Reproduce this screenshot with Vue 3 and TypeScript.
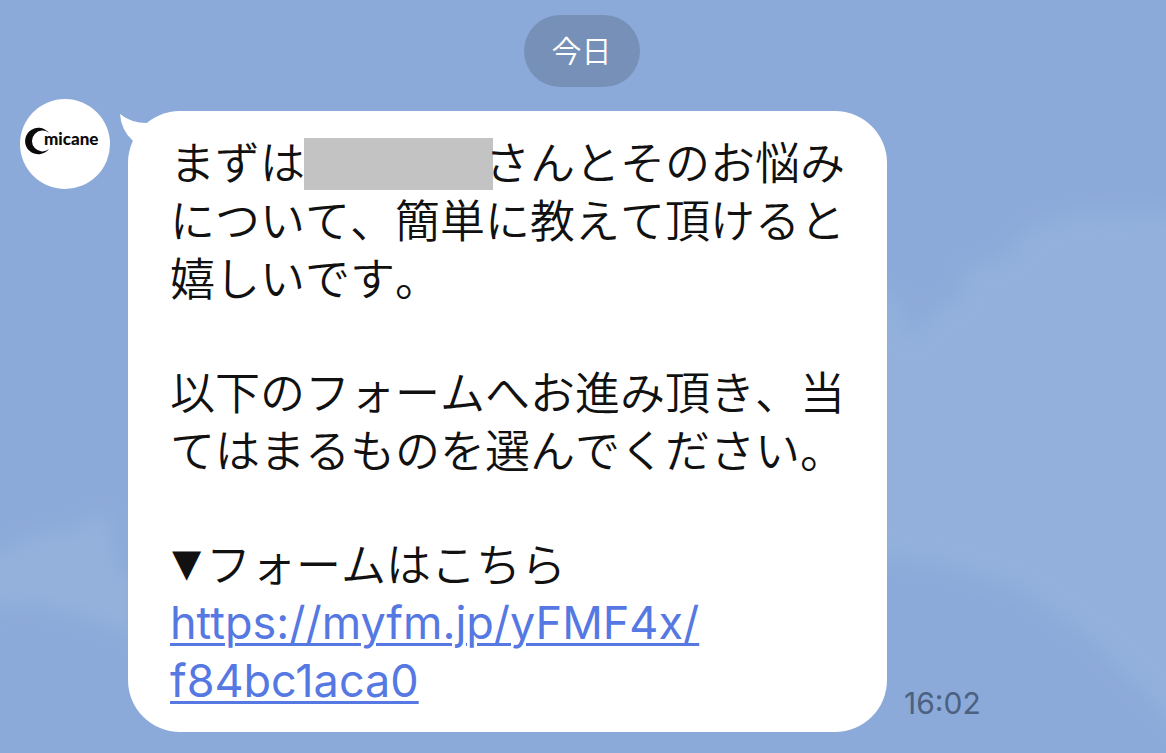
<script setup lang="ts">
interface Message {
  sender: string
  time: string
  url: string
  urlLines: string[]
}

const message: Message = {
  sender: 'micane',
  time: '16:02',
  url: 'https://myfm.jp/yFMF4x/f84bc1aca0',
  urlLines: ['https://myfm.jp/yFMF4x/', 'f84bc1aca0'],
}
</script>

<template>
  <main class="chat">
    <svg class="sky" viewBox="0 0 1166 753" preserveAspectRatio="none" aria-hidden="true">
      <defs>
        <filter id="soft" x="-20%" y="-20%" width="140%" height="140%">
          <feGaussianBlur stdDeviation="10" />
        </filter>
      </defs>
      <path
        filter="url(#soft)"
        fill="#92b0db"
        d="M870 290 L898 298 L912 338 L935 306 L958 298 L964 268 L1004 256 L1030 226 L1080 212 L1220 214 L1220 780 L1150 700 L1090 640 L1020 590 L940 566 L870 556 Z"
      />
      <path
        filter="url(#soft)"
        fill="#93b1db"
        d="M-30 556 L10 548 L42 532 L82 528 L98 508 L110 520 L116 560 L136 590 L136 636 L90 620 L40 606 L-30 608 Z"
      />
    </svg>

    <div class="day"><time class="day-label">今日</time></div>

    <article class="message">
      <svg class="avatar" viewBox="0 0 90 90" role="img" :aria-label="message.sender">
        <circle cx="45" cy="45" r="45" fill="#fff" />
        <path d="M29 34 A13.3 13.3 0 1 0 29 50 A10.4 10.4 0 1 1 29 34 Z" fill="#0a0a0a" />
        <text x="24" y="46" class="avatar-name">{{ message.sender }}</text>
      </svg>

      <div class="bubble">
        <svg class="tail" viewBox="0 0 40 40" aria-hidden="true">
          <path d="M0 0 Q11 9 27 9 L40 8 L40 36 L13 27 Q1 16 0 0 Z" fill="#fff" />
        </svg>
        <p>
          まずは<span class="redacted"></span>さんとそのお悩み<br />について、簡単に教えて頂けると<br />嬉しいです。
        </p>
        <p>以下のフォームへお進み頂き、当<br />てはまるものを選んでください。</p>
        <div>
          <p><span class="marker">▼</span>フォームはこちら</p>
          <a class="link" :href="message.url"
            >{{ message.urlLines[0] }}<br />{{ message.urlLines[1] }}</a
          >
        </div>
      </div>

      <time class="sent">{{ message.time }}</time>
    </article>
  </main>
</template>

<style>
body {
  margin: 0;
  background: #8caad9;
}
</style>

<style scoped>
.chat {
  position: relative;
  min-height: 100vh;
  box-sizing: border-box;
  padding: 15px 23px 21px 20px;
  overflow: hidden;
  background: #8caad9;
  font-family: Inter, "Noto Sans CJK JP", sans-serif;
}

.sky {
  position: absolute;
  inset: 0;
  width: 100%;
  height: 100%;
}

.day {
  position: relative;
  display: flex;
  justify-content: center;
  margin-bottom: 12px;
}

.day-label {
  padding: 0 28px 4px;
  border-radius: 36px;
  background: #7790b8;
  color: #fff;
  font-family: "Noto Sans CJK JP", sans-serif;
  font-size: 30px;
  font-weight: 350;
  line-height: 68px;
}

.message {
  position: relative;
  display: flex;
  align-items: flex-start;
}

.avatar {
  flex: none;
  width: 90px;
  height: 90px;
  margin-right: 18px;
}

.avatar-name {
  font-family: Lato, sans-serif;
  font-size: 17px;
  font-weight: 900;
  fill: #0a0a0a;
}

.bubble {
  position: relative;
  display: flex;
  flex-direction: column;
  gap: 56px;
  margin-top: 12px;
  padding: 21px 42px 22px;
  border-radius: 52px;
  background: #fff;
  color: #111;
  font-family: "Noto Sans CJK JP", sans-serif;
  font-size: 45px;
  font-weight: 350;
  font-kerning: none;
  line-height: 58px;
  white-space: nowrap;
}

.bubble p {
  margin: 0;
}

.tail {
  position: absolute;
  top: 3px;
  left: -8px;
  width: 40px;
  height: 40px;
}

.redacted {
  display: inline-block;
  width: 189px;
  height: 52px;
  margin: 6px -8px 0 -1px;
  vertical-align: top;
  background: #c3c3c3;
}

.marker {
  display: inline-block;
  width: 36px;
  font-family: "DejaVu Sans", sans-serif;
  font-size: 38px;
  font-weight: 400;
  line-height: 38px;
  text-indent: 2px;
  vertical-align: 6px;
}

.link {
  display: block;
  margin-top: 2px;
  color: #5578e2;
  font-family: Inter, sans-serif;
  font-size: 45px;
  font-weight: 400;
  font-kerning: auto;
  text-decoration: underline;
  text-decoration-thickness: 3px;
  text-underline-offset: 4px;
}

.sent {
  align-self: flex-end;
  margin: 0 0 11px 17px;
  color: #4b617f;
  font-size: 30px;
  line-height: 36px;
}
</style>
